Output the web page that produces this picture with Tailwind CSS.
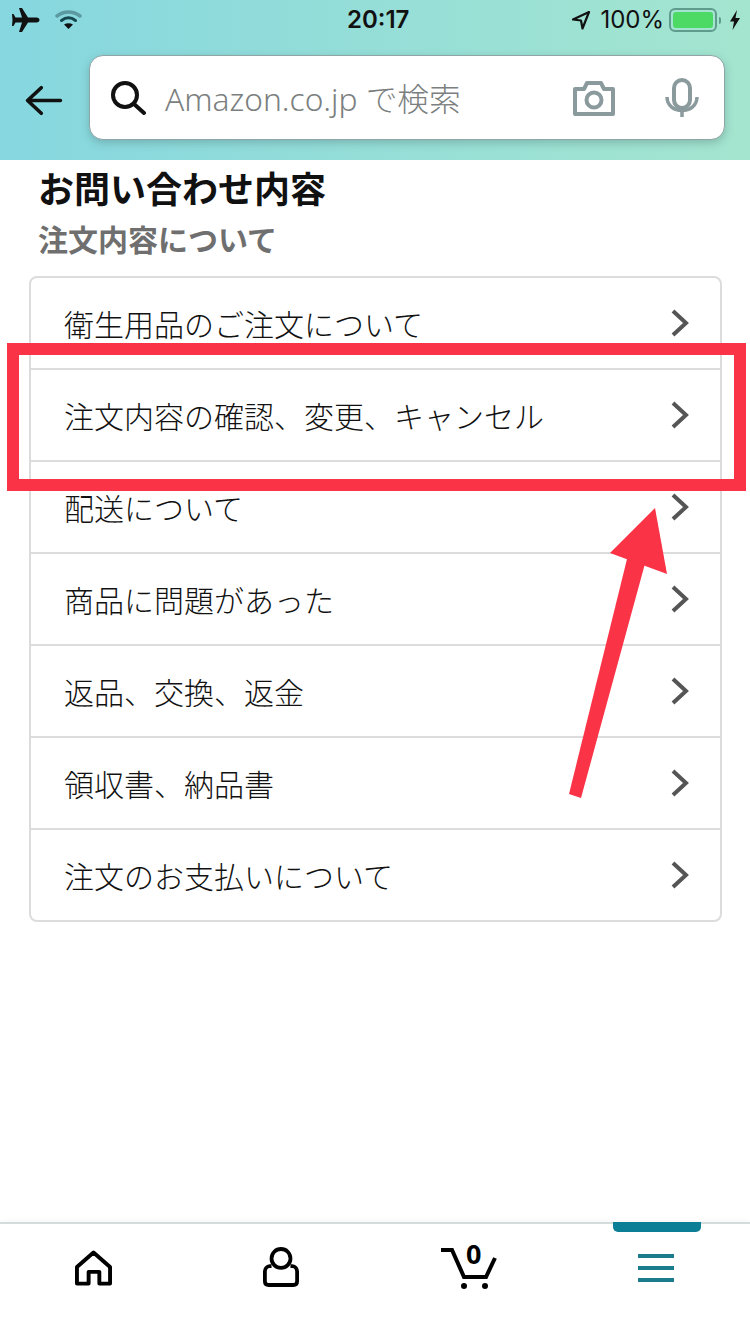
<!DOCTYPE html>
<html lang="ja">
<head>
  <meta charset="UTF-8" />
  <meta name="viewport" content="width=device-width, initial-scale=1.0"/>
  <title>お問い合わせ内容</title>
  <script src="https://cdn.jsdelivr.net/npm/@tailwindcss/browser@4"></script>
</head>
<body class="bg-white">
<div class="relative w-[750px] h-[1334px] overflow-hidden flex flex-col font-['Noto_Sans_CJK_JP','Noto_Sans',sans-serif]">

  <!-- Header -->
  <header class="h-[160px] shrink-0 bg-gradient-to-r from-[#86d7e0] to-[#a4e5cf]">
    <!-- Status bar -->
    <div class="h-[40px] relative flex items-center justify-between pl-[11px] pr-[9px] text-[#111]">
      <div class="flex items-center gap-[15px]">
        <svg width="29" height="26" viewBox="0 0 29 26" fill="#111"><path d="M8 1h3l6 9.500h8.500c1.800 0 3 1.300 3 2.500s-1.200 2.500-3 2.500H17L11 25H8l3-9.500H4.500L2.500 19H1l.5-6L1 7h1.500l2 3.500H11z"/></svg>
        <svg width="27" height="20" viewBox="0 0 27 20" fill="none" stroke-linecap="round">
          <path d="M2 6c7-5.500 16-5.500 23 0" stroke="#5b9aa0" stroke-width="3.500"/>
          <path d="M6.500 10.500c4.500-3.500 9.500-3.500 14 0" stroke="#15484e" stroke-width="3"/>
          <path d="M13.500 19l-4.500-4.500c2.800-1.800 6.200-1.800 9 0z" fill="#111"/>
        </svg>
      </div>
      <span class="absolute left-[347px] top-[3px] text-[24px] leading-[34px] font-semibold font-['Inter',sans-serif]">20:17</span>
      <div class="flex items-center">
        <svg width="20" height="20" viewBox="0 0 20 20" fill="none" stroke="#111" stroke-width="2.200" stroke-linejoin="round" class="mr-[9px]"><path d="M18 2L2 9.500l8 1 1.500 8z"/></svg>
        <span class="text-[24px] leading-[34px] font-['Inter',sans-serif] font-normal mr-[5px]">100%</span>
        <div class="w-[48px] h-[24px] rounded-[6px] border-2 border-[#5f9c8c] p-[2px]">
          <div class="w-full h-full rounded-[3px] bg-[#4cd964]"></div>
        </div>
        <div class="w-[2px] h-[7px] bg-[#5f9c8c] ml-[2px] mr-[8px] rounded-r-full"></div>
        <svg width="12" height="22" viewBox="0 0 12 22" fill="#111"><path d="M8 1L1 12.500h4L3.500 21 11 9H6.500z"/></svg>
      </div>
    </div>
    <!-- Search row -->
    <div class="flex items-center pt-[15px] pl-[25px]">
      <svg width="38" height="31" viewBox="0 0 40 34" fill="none" stroke="#111" stroke-width="4" stroke-linecap="round" stroke-linejoin="round" class="mr-[26px] mt-[5px]"><path d="M38 17H2M17 3L2 17l15 14"/></svg>
      <div class="w-[636px] h-[85px] bg-white rounded-[14px] border border-[#8fa5a6] shadow-[0_3px_8px_rgba(60,90,90,0.3)] flex items-center pl-[20px]">
        <svg width="36" height="36" viewBox="0 0 36 36" fill="none" stroke="#111" stroke-width="4" stroke-linecap="round"><circle cx="15" cy="15" r="12"/><path d="M24 24l10 9"/></svg>
        <span class="ml-[19px] mt-[3px] text-[31.700px] leading-[40px] text-[#7b7f80] font-light font-['Noto_Sans','Noto_Sans_CJK_JP',sans-serif]">Amazon.co.jp で検索</span>
        <svg width="44" height="36" viewBox="0 0 44 36" fill="none" stroke="#8a9a9d" stroke-width="4" stroke-linejoin="round" class="absolute left-[572px] top-[80px]"><path d="M3 9h9l3-6h14l3 6h9v25H3z"/><circle cx="22" cy="20" r="7.500"/></svg>
        <svg width="34" height="40" viewBox="0 0 34 40" fill="none" stroke="#8a9a9d" class="absolute left-[665px] top-[78px]"><rect x="9" y="2" width="16" height="28" rx="8" stroke-width="4"/><path d="M2 19c0 18 30 18 30 0" stroke-width="3.500"/><path d="M17 32v7" stroke-width="3.500"/></svg>
      </div>
    </div>
  </header>

  <!-- Content -->
  <main class="flex-1 px-[29px]">
    <h1 class="ml-[9px] mt-[3px] text-[36px] leading-[48px] font-bold text-[#111]">お問い合わせ内容</h1>
    <h2 class="ml-[9px] mt-[7px] text-[30px] leading-[40px] font-bold text-[#6f6f6f]">注文内容について</h2>
    <ul class="mt-[18px] w-[693px] rounded-[8px] border-2 border-[#dcdcdc] divide-y-2 divide-[#dcdcdc] text-[30px] font-light text-[#111]">
      <li class="h-[92px] flex items-center justify-between pl-[33px] pr-[30px]"><span>衛生用品のご注文について</span><svg width="20" height="28" viewBox="0 0 20 28" fill="none" stroke="#555" stroke-width="4"><path d="M3 2l13 12L3 26"/></svg></li>
      <li class="h-[92px] flex items-center justify-between pl-[33px] pr-[30px]"><span>注文内容の確認、変更、キャンセル</span><svg width="20" height="28" viewBox="0 0 20 28" fill="none" stroke="#555" stroke-width="4"><path d="M3 2l13 12L3 26"/></svg></li>
      <li class="h-[92px] flex items-center justify-between pl-[33px] pr-[30px]"><span>配送について</span><svg width="20" height="28" viewBox="0 0 20 28" fill="none" stroke="#555" stroke-width="4"><path d="M3 2l13 12L3 26"/></svg></li>
      <li class="h-[92px] flex items-center justify-between pl-[33px] pr-[30px]"><span>商品に問題があった</span><svg width="20" height="28" viewBox="0 0 20 28" fill="none" stroke="#555" stroke-width="4"><path d="M3 2l13 12L3 26"/></svg></li>
      <li class="h-[92px] flex items-center justify-between pl-[33px] pr-[30px]"><span>返品、交換、返金</span><svg width="20" height="28" viewBox="0 0 20 28" fill="none" stroke="#555" stroke-width="4"><path d="M3 2l13 12L3 26"/></svg></li>
      <li class="h-[92px] flex items-center justify-between pl-[33px] pr-[30px]"><span>領収書、納品書</span><svg width="20" height="28" viewBox="0 0 20 28" fill="none" stroke="#555" stroke-width="4"><path d="M3 2l13 12L3 26"/></svg></li>
      <li class="h-[90px] flex items-center justify-between pl-[33px] pr-[30px]"><span>注文のお支払いについて</span><svg width="20" height="28" viewBox="0 0 20 28" fill="none" stroke="#555" stroke-width="4"><path d="M3 2l13 12L3 26"/></svg></li>
    </ul>
  </main>

  <!-- Bottom nav -->
  <nav class="relative h-[112px] shrink-0 border-t-2 border-[#d3dcdb] grid grid-cols-4 shadow-[0_-2px_4px_rgba(0,0,0,0.03)]">
    <div class="flex justify-center pt-[26px]">
      <svg width="37" height="36" viewBox="0 0 38 36" fill="none" stroke="#000" stroke-width="4" stroke-linejoin="round"><path d="M2 34V17L19 2l17 15v17H25V22H14v12z"/></svg>
    </div>
    <div class="flex justify-center pt-[23px]">
      <svg width="36" height="40" viewBox="0 0 38 42" fill="none" stroke="#000" stroke-width="4" stroke-linejoin="round"><circle cx="19" cy="12" r="10"/><path d="M9 20H7c-3 0-5 3-5 6v10c0 2 1 4 4 4h26c3 0 4-2 4-4V26c0-3-2-6-5-6h-2"/></svg>
    </div>
    <div class="relative flex justify-center pt-[22px]">
      <svg width="56" height="44" viewBox="0 0 56 44" fill="none" stroke="#000" stroke-width="4"><path d="M0 4h11l12 27h22l9-19"/><circle cx="23" cy="40" r="3" fill="#000" stroke="none"/><circle cx="44" cy="40" r="3" fill="#000" stroke="none"/></svg>
      <span class="absolute left-[91px] top-[12px] text-[27px] leading-[36px] font-bold text-black font-['Noto_Sans',sans-serif]">0</span>
    </div>
    <div class="relative flex flex-col items-center pt-[30px] gap-[8px]">
      <div class="absolute left-[50px] top-[-2px] w-[88px] h-[10px] rounded-b-[5px] bg-[#0c7f97]"></div>
      <div class="w-[36px] h-[4px] bg-[#1b7c8c]"></div>
      <div class="w-[36px] h-[4px] bg-[#1b7c8c]"></div>
      <div class="w-[36px] h-[4px] bg-[#1b7c8c]"></div>
    </div>
  </nav>

  <!-- Annotation overlay -->
  <div class="absolute left-[7px] top-[343px] w-[739px] h-[148px] border-[12px] border-[#fb3347]"></div>
  <svg class="absolute left-0 top-0" width="750" height="1334" viewBox="0 0 750 1334" fill="#fb3347">
    <path d="M569 794L628 555 646 560 581 798z"/>
    <path d="M655 508L610 553 667 574z"/>
  </svg>
</div>
</body>
</html>
